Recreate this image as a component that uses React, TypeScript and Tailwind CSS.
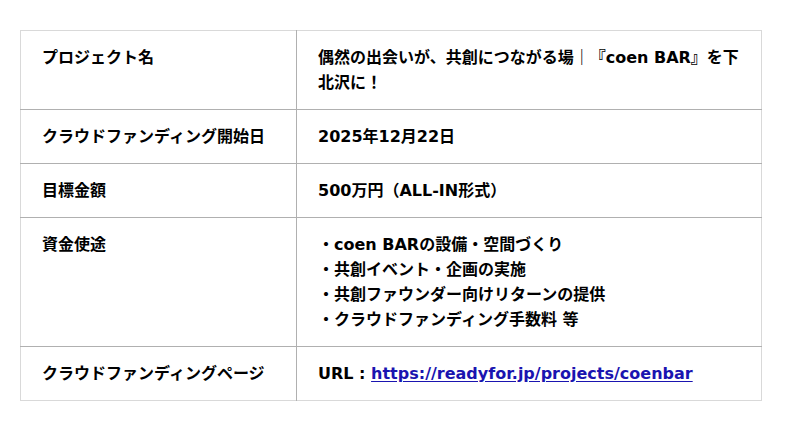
import React from 'react';

interface Row {
  label: string;
  value: React.ReactNode;
}

const rows: Row[] = [
  {
    label: 'プロジェクト名',
    value: '偶然の出会いが、共創につながる場｜『coen BAR』を下北沢に！',
  },
  { label: 'クラウドファンディング開始日', value: '2025年12月22日' },
  { label: '目標金額', value: '500万円（ALL-IN形式）' },
  {
    label: '資金使途',
    value: (
      <>
        <p>・coen BARの設備・空間づくり</p>
        <p>・共創イベント・企画の実施</p>
        <p>・共創ファウンダー向けリターンの提供</p>
        <p>・クラウドファンディング手数料 等</p>
      </>
    ),
  },
  {
    label: 'クラウドファンディングページ',
    value: (
      <>
        URL :{' '}
        <a href="#" className="text-[#1a14b0] underline underline-offset-2">
          https://readyfor.jp/projects/coenbar
        </a>
      </>
    ),
  },
];

const App: React.FC = () => {
  return (
    <div
      className="bg-white w-[800px] h-[431px] pt-[30px] pl-[20px]"
      style={{ fontFamily: '"DejaVu Sans", "Noto Sans CJK JP", sans-serif' }}
    >
      <table className="w-[742px] border-collapse border border-[#d9d9d9] text-[16px] leading-[25px] font-bold text-black">
        <tbody>
          {rows.map((row, i) => (
            <tr key={i} className={i > 0 ? 'border-t border-[#b0b0b0]' : ''}>
              <td className="w-[276px] align-top px-[21px] py-[14px] border-r border-[#b0b0b0]">
                {row.label}
              </td>
              <td className="align-top px-[21px] py-[14px]">{row.value}</td>
            </tr>
          ))}
        </tbody>
      </table>
    </div>
  );
};

export default App;
